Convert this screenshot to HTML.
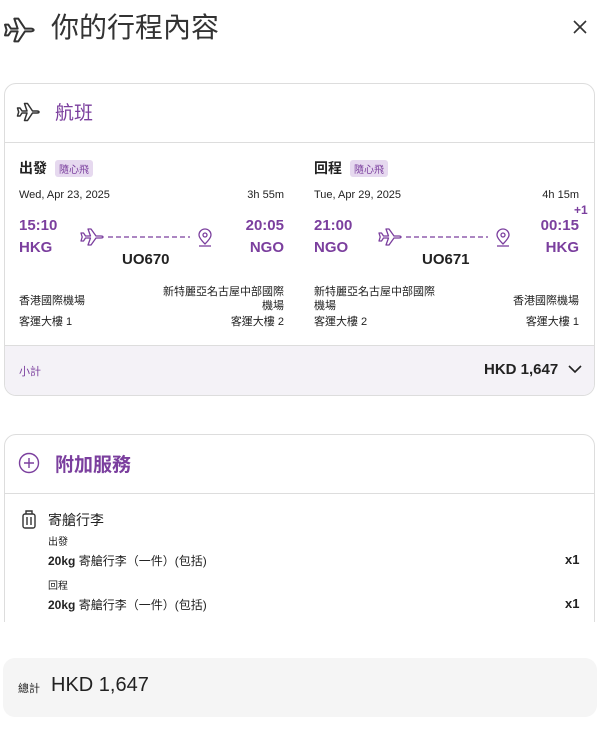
<!DOCTYPE html>
<html><head><meta charset="utf-8"><style>
*{margin:0;padding:0;box-sizing:border-box}
body{width:600px;height:735px;background:#fff;font-family:"Liberation Sans","Noto Sans CJK TC",sans-serif;color:#222;position:relative;overflow:hidden}
.a{position:absolute;white-space:nowrap}
.p{color:#7b3f9e}
.b{font-weight:bold}
.r{text-align:right}
.tag{background:#e6d9ef;color:#7b3f9e;font-size:10px;padding:1px 4px;border-radius:3px}
</style></head><body>
<svg class="a" style="left:3px;top:14px" width="32" height="32" viewBox="0 0 24 24" fill="none" stroke="#333" stroke-width="1.5" stroke-linejoin="round"><path d="M1.5 8h2.5l2 3h5L8.5 3.5h3l5 7.5H21c1.2 0 2 .5 2 1s-.8 1-2 1h-4.5l-5 7.5h-3L11 13H6l-2 3H1.5l1.2-4z"/></svg>
<div class="a" style="left:51px;top:6px;font-size:28px;color:#333">你的行程內容</div>
<svg class="a" style="left:573px;top:20px" width="14" height="14" viewBox="0 0 14 14" stroke="#333" stroke-width="1.6"><path d="M1 1l12 12M13 1L1 13"/></svg>

<div class="a" style="left:4px;top:83px;width:591px;height:313px;border:1px solid #ddd;border-radius:12px;overflow:hidden">
 <div style="position:absolute;left:0;top:58px;width:100%;height:1px;background:#ddd"></div>
 <div style="position:absolute;left:0;top:261px;width:100%;height:52px;background:#f4f2f7;border-top:1px solid #ddd"></div>
</div>
<svg class="a" style="left:16px;top:100px" width="24" height="24" viewBox="0 0 24 24" fill="none" stroke="#333" stroke-width="1.5" stroke-linejoin="round"><path d="M1.5 8h2.5l2 3h5L8.5 3.5h3l5 7.5H21c1.2 0 2 .5 2 1s-.8 1-2 1h-4.5l-5 7.5h-3L11 13H6l-2 3H1.5l1.2-4z"/></svg>
<div class="a p" style="left:55px;top:98px;font-size:19px">航班</div>

<!-- outbound -->
<div class="a b" style="left:19px;top:158px;font-size:14px">出發</div>
<div class="a tag" style="left:55px;top:160px">隨心飛</div>
<div class="a" style="left:19px;top:189px;font-size:11px">Wed, Apr 23, 2025</div>
<div class="a r" style="left:200px;width:84px;top:189px;font-size:11px">3h 55m</div>
<div class="a p b" style="left:19px;top:217px;font-size:15px">15:10</div>
<div class="a p b" style="left:19px;top:239px;font-size:15px">HKG</div>
<div class="a p b r" style="left:200px;width:84px;top:217px;font-size:15px">20:05</div>
<div class="a p b r" style="left:200px;width:84px;top:239px;font-size:15px">NGO</div>
<svg class="a" style="left:80px;top:227px" width="136" height="24" viewBox="0 0 136 24" fill="none" stroke="#7b3f9e" stroke-width="1.3" stroke-linejoin="round"><path d="M1 6h2.5l2 3h5L8 2h3l5 7h5c1.2 0 2 .5 2 1s-.8 1-2 1h-5l-5 7H8l2.5-7h-5l-2 3H1l1.2-4z"/><path d="M28 10h82" stroke-dasharray="5 3"/><path d="M125 17c-4-4-6-7-6-9a6 6 0 0 1 12 0c0 2-2 5-6 9z"/><circle cx="125" cy="8" r="2"/><path d="M119 19h12"/></svg>
<div class="a b" style="left:122px;top:251px;font-size:15px">UO670</div>
<div class="a" style="left:19px;top:292px;font-size:11px">香港國際機場</div>
<div class="a" style="left:19px;top:313px;font-size:11px">客運大樓 1</div>
<div class="a r" style="left:162px;width:122px;top:285px;font-size:11px;white-space:normal;line-height:14px">新特麗亞名古屋中部國際機場</div>
<div class="a r" style="left:150px;width:134px;top:313px;font-size:11px">客運大樓 2</div>

<!-- return -->
<div class="a b" style="left:314px;top:158px;font-size:14px">回程</div>
<div class="a tag" style="left:350px;top:160px">隨心飛</div>
<div class="a" style="left:314px;top:189px;font-size:11px">Tue, Apr 29, 2025</div>
<div class="a r" style="left:495px;width:84px;top:189px;font-size:11px">4h 15m</div>
<div class="a p b" style="left:574px;top:203px;font-size:12px">+1</div>
<div class="a p b" style="left:314px;top:217px;font-size:15px">21:00</div>
<div class="a p b" style="left:314px;top:239px;font-size:15px">NGO</div>
<div class="a p b r" style="left:495px;width:84px;top:217px;font-size:15px">00:15</div>
<div class="a p b r" style="left:495px;width:84px;top:239px;font-size:15px">HKG</div>
<svg class="a" style="left:378px;top:227px" width="136" height="24" viewBox="0 0 136 24" fill="none" stroke="#7b3f9e" stroke-width="1.3" stroke-linejoin="round"><path d="M1 6h2.5l2 3h5L8 2h3l5 7h5c1.2 0 2 .5 2 1s-.8 1-2 1h-5l-5 7H8l2.5-7h-5l-2 3H1l1.2-4z"/><path d="M28 10h82" stroke-dasharray="5 3"/><path d="M125 17c-4-4-6-7-6-9a6 6 0 0 1 12 0c0 2-2 5-6 9z"/><circle cx="125" cy="8" r="2"/><path d="M119 19h12"/></svg>
<div class="a b" style="left:422px;top:251px;font-size:15px">UO671</div>
<div class="a" style="left:314px;top:285px;font-size:11px;white-space:normal;width:124px;line-height:14px">新特麗亞名古屋中部國際機場</div>
<div class="a" style="left:314px;top:313px;font-size:11px">客運大樓 2</div>
<div class="a r" style="left:445px;width:134px;top:292px;font-size:11px">香港國際機場</div>
<div class="a r" style="left:445px;width:134px;top:313px;font-size:11px">客運大樓 1</div>

<div class="a" style="left:19px;top:363px;font-size:11px;color:#7b3f9e">小計</div>
<div class="a b" style="left:484px;top:361px;font-size:15px">HKD 1,647</div>
<svg class="a" style="left:568px;top:364px" width="14" height="10" viewBox="0 0 14 10" fill="none" stroke="#222" stroke-width="1.6"><path d="M1 2l6 6 6-6"/></svg>

<!-- extras -->
<div class="a" style="left:4px;top:434px;width:591px;height:200px;border:1px solid #ddd;border-radius:12px"></div>
<div class="a" style="left:0;top:622px;width:600px;height:30px;background:#fff"></div>
<div class="a" style="left:5px;top:493px;width:589px;height:1px;background:#ddd"></div>
<svg class="a" style="left:18px;top:452px" width="22" height="22" viewBox="0 0 22 22" fill="none" stroke="#7b3f9e" stroke-width="1.4"><circle cx="11" cy="11" r="9.5"/><path d="M11 6v10M6 11h10"/></svg>
<div class="a p b" style="left:55px;top:450px;font-size:19px">附加服務</div>
<svg class="a" style="left:21px;top:510px" width="16" height="20" viewBox="0 0 16 20" fill="none" stroke="#333" stroke-width="1.4"><rect x="2" y="4" width="12" height="14" rx="2"/><path d="M5 4V1h6v3M6 7v8M10 7v8"/></svg>
<div class="a" style="left:48px;top:510px;font-size:14px">寄艙行李</div>
<div class="a" style="left:48px;top:533px;font-size:10px">出發</div>
<div class="a" style="left:48px;top:552px;font-size:12px"><b>20kg</b> 寄艙行李（一件）(包括)</div>
<div class="a b" style="left:565px;top:552px;font-size:13px">x1</div>
<div class="a" style="left:48px;top:577px;font-size:10px">回程</div>
<div class="a" style="left:48px;top:596px;font-size:12px"><b>20kg</b> 寄艙行李（一件）(包括)</div>
<div class="a b" style="left:565px;top:596px;font-size:13px">x1</div>

<div class="a" style="left:3px;top:658px;width:594px;height:59px;background:#f5f5f5;border-radius:12px"></div>
<div class="a" style="left:18px;top:680px;font-size:11px">總計</div>
<div class="a" style="left:51px;top:674px;font-size:20px">HKD 1,647</div>
</body></html>
